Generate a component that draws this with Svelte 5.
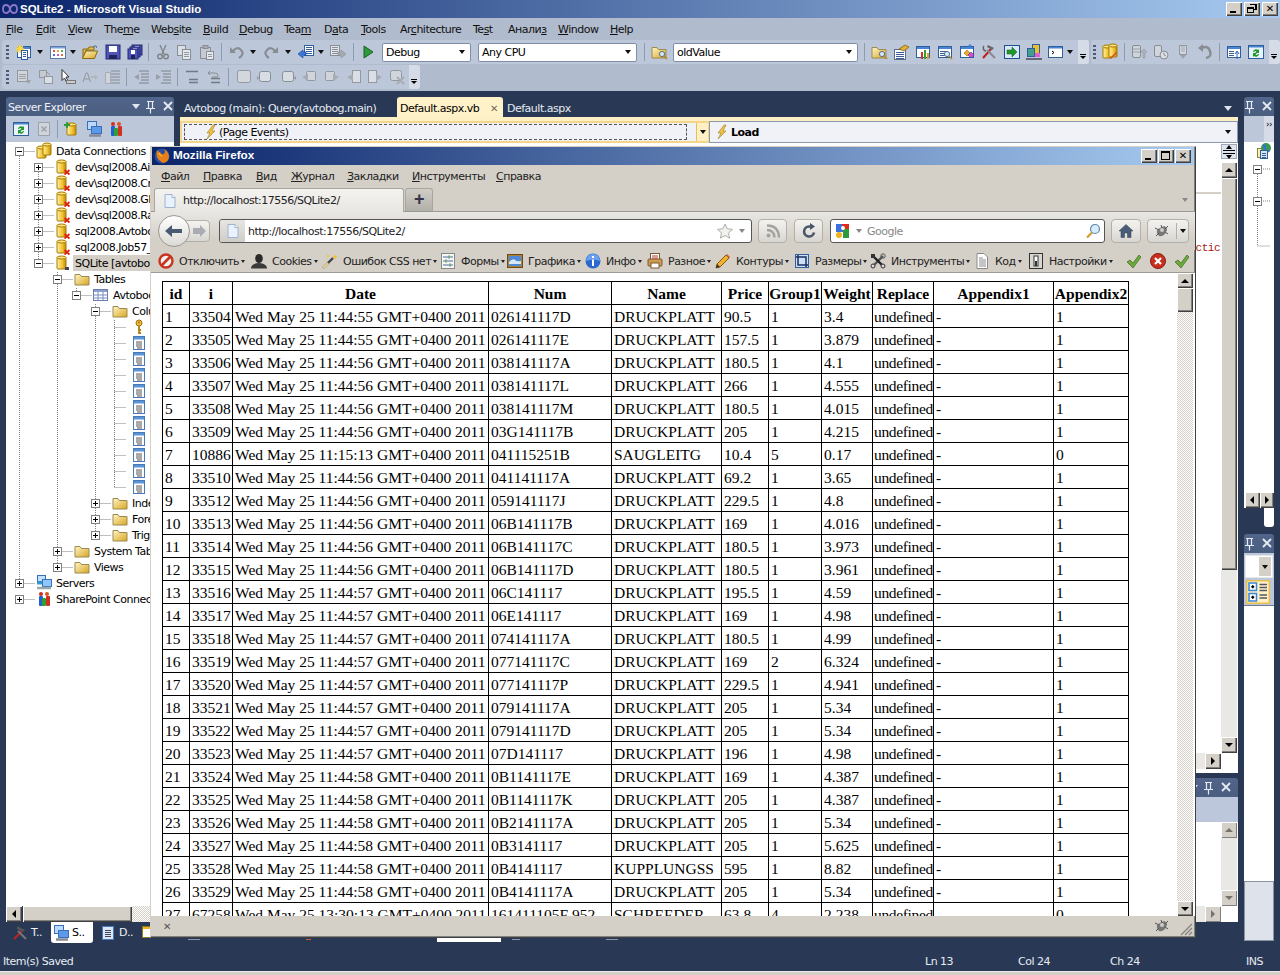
<script>
  const win = (c = '#4a86d0') => `<rect x="1.500" y="2.500" width="13" height="11" fill="#fff" stroke="#2d5f9e"/><rect x="2" y="3" width="12" height="2" fill="${c}"/>`;
  const lines = (x, y, n, w = 4, col = '#3a5f96') => Array.from({ length: n }, (_, i) => `<path d="M${x} ${y + i * 2 + .5}h${w}" stroke="${col}"/>`).join('');
  const cyl = (x, y, h, w = 8) => `<rect x="${x}" y="${y + 1}" width="${w}" height="${h}" rx="1" fill="url(#gy)" stroke="#a67a00"/><ellipse cx="${x + w / 2}" cy="${y + 1.5}" rx="${w / 2}" ry="1.500" fill="#ffe680" stroke="#a67a00"/>`;
  const gy = `<defs><linearGradient id="gy" x1="0" x2="1"><stop offset="0" stop-color="#fff2a8"/><stop offset=".6" stop-color="#f2c230"/><stop offset="1" stop-color="#b98a10"/></linearGradient><linearGradient id="gf" x1="0" x2="1" y1="0" y2="1"><stop offset="0" stop-color="#fff6c8"/><stop offset="1" stop-color="#d9a520"/></linearGradient></defs>`;
  const folder = `<path d="M1 3.500h5l1.500 2h7.500v8.500h-14z" fill="url(#gf)" stroke="#9a8a50"/>`;
  const mag = (x, y) => `<circle cx="${x}" cy="${y}" r="2.600" fill="#cfe6fb" stroke="#5a6f86"/><path d="M${x + 2} ${y + 2}l3 3" stroke="#b58a2a" stroke-width="1.600"/>`;
  const redx = `<path d="M9.500 11l5 4.500M14.500 11l-5 4.500" stroke="#e0200c" stroke-width="1.700"/>`;
  const floppy = (x, y, s) => `<rect x="${x}" y="${y}" width="${s}" height="${s}" fill="#4f55b8" stroke="#23286e"/><rect x="${x + 3}" y="${y + 1}" width="${s - 6}" height="${s / 2 - 1}" fill="#fff"/><rect x="${x + 3}" y="${y + s - 4}" width="${s - 6}" height="4" fill="#20245a"/>`;
  const bubble = (fill = '#e8eaee') => `<rect x="2.500" y="2.500" width="11" height="10" rx="2" fill="${fill}" stroke="#666"/>`;

  const I = {
    newproj: win() + `<path d="M4 0l1 2.500 2.500-1-1 2.500 2.500 1-2.500 1 1 2.500-2.500-1-1 2.500-1-2.500-2.500 1 1-2.500-2.500-1 2.500-1-1-2.500 2.500 1z" fill="#ffd84a"/><rect x="5.500" y="6.500" width="6" height="9" fill="#fff" stroke="#2d5f9e"/>` + lines(7, 8, 3, 3),
    grid: `<rect x=".5" y="2.500" width="15" height="12" fill="#fff" stroke="#5a7aa8"/><rect x="1" y="3" width="14" height="1.500" fill="#7aa2d8"/><g><rect x="3" y="6" width="2" height="2" fill="#e25050"/><rect x="7" y="6" width="2" height="2" fill="#e8b020"/><rect x="11" y="6" width="2" height="2" fill="#50b050"/><rect x="3" y="10" width="2" height="2" fill="#5070e0"/><rect x="7" y="10" width="2" height="2" fill="#d050c0"/><rect x="11" y="10" width="2" height="2" fill="#e07030"/></g>`,
    open: gy + `<path d="M1 5h5l1-2h5v3H4L1 14z" fill="#e8c050" stroke="#8a6a10"/><path d="M4 7h11.500l-3 7.500h-12z" fill="url(#gf)" stroke="#8a6a10"/><path d="M11 3q2-2.500 4 0l-1 .5" fill="none" stroke="#4a6aa0"/>`,
    save: floppy(1, 1, 14),
    saveall: floppy(5, 1, 10) + floppy(3, 3, 10) + floppy(1, 5, 10),
    cut: `<path d="M5 1l4 9M11 1l-4 9" stroke="#555" stroke-width="1.300"/><circle cx="5" cy="12.500" r="2.300" fill="none" stroke="#555" stroke-width="1.400"/><circle cx="11" cy="12.500" r="2.300" fill="none" stroke="#555" stroke-width="1.400"/>`,
    copy: `<rect x="1.500" y="1.500" width="8" height="10" fill="#eee" stroke="#666"/><rect x="6.500" y="5.500" width="8" height="10" fill="#fff" stroke="#666"/>` + lines(8, 8, 3, 5, '#777'),
    paste: `<rect x="1.500" y="3.500" width="10" height="11" fill="#ccc" stroke="#666"/><rect x="4" y="1.500" width="5" height="3" fill="#999" stroke="#666"/><rect x="7.500" y="7.500" width="7" height="8" fill="#fff" stroke="#666"/>` + lines(9, 10, 2, 4, '#777'),
    undo: `<path d="M4 7q4-5 8-1t-2 8" fill="none" stroke="#666" stroke-width="2.200"/><path d="M1 3v6h6z" fill="#666"/>`,
    redo: `<path d="M12 7q-4-5-8-1t2 8" fill="none" stroke="#666" stroke-width="2.200"/><path d="M15 3v6H9z" fill="#666"/>`,
    nav: `<rect x="6.500" y="1.500" width="9" height="10" fill="#fff" stroke="#2d5f9e"/>` + lines(8, 3, 4, 6) + `<path d="M8 9v3h-3v3L0 11l5-4v2z" transform="translate(0 -1)" fill="#3a7ae0" stroke="#1a3f90" stroke-width=".6"/>`,
    navf: `<rect x=".5" y="1.500" width="9" height="10" fill="#fff" stroke="#666"/>` + lines(2, 3, 4, 6, '#666') + `<path d="M8 8v3h3v3l5-4-5-4v2z" fill="#999" stroke="#666" stroke-width=".6"/>`,
    play: `<path d="M4 2l9 6-9 6z" fill="#2f9a3a" stroke="#1a5f22"/>`,
    findf: gy + folder + mag(11, 10),
    props: gy + `<rect x="1.500" y="5.500" width="11" height="10" fill="#fff" stroke="#5a6f86"/>` + lines(3, 8, 4, 8) + `<path d="M6 5l6-4 4 2-5 4z" fill="#e0b030" stroke="#7a5a10" stroke-width=".7"/>`,
    charts: win() + `<rect x="6" y="8" width="2" height="7" fill="#d03030"/><rect x="9" y="6" width="2" height="9" fill="#30a030"/><rect x="12" y="9" width="2" height="6" fill="#e0a020"/>`,
    findw: win() + lines(3, 7, 3, 6) + mag(10, 10),
    cls: win() + `<path d="M5 9l3-3 3 3-3 3z" fill="#e8b020" stroke="#8a6a10" stroke-width=".6"/><path d="M9 11l3-3 3 3-3 3z" fill="#d050d0" stroke="#702090" stroke-width=".6"/><path d="M11 0v4M9 2h4" stroke="#3a7ae0"/>`,
    tools: `<path d="M2 14L10 5" stroke="#c02020" stroke-width="2"/><path d="M7 1l6 3-2 2-5-3z" fill="#666"/><path d="M14 14L6 6" stroke="#888" stroke-width="2"/><path d="M3 2a3 3 0 0 0 2 5" fill="none" stroke="#666" stroke-width="1.500"/>`,
    go: `<rect x=".5" y="1.500" width="15" height="13" fill="#d8e8f8" stroke="#1f4f8e"/><path d="M3 6h5V3l5 5-5 5v-3H3z" fill="#1f9a2a" stroke="#0f5a18" stroke-width=".5"/>`,
    team: `<rect x="6.500" y=".5" width="7" height="9" fill="#e8c030" stroke="#2d5f9e"/><rect x="1.500" y="4.500" width="7" height="8" fill="#40a090" stroke="#2d5f9e"/><rect x="9" y="9" width="5" height="4" fill="#e060d0"/><path d="M0 15h16" stroke="#667" stroke-width="2"/>`,
    cmd: `<rect x=".5" y="2.500" width="14" height="11" fill="#fff" stroke="#2d5f9e"/><rect x="1" y="3" width="13" height="1.500" fill="#4a86d0"/><path d="M4 7l2 1.500L4 10" fill="none" stroke="#000"/>`,
    dbed: gy + cyl(1, 1, 12, 8) + cyl(7, 0, 12, 8) + `<path d="M8 14l6-6 1 1-6 6z" fill="#d05020"/>`,
    gdb: `<rect x="1.500" y="1.500" width="8" height="12" rx="1.500" fill="#ddd" stroke="#666"/><path d="M2 5h7M2 8h7" stroke="#888"/><path d="M10 8l3-3 3 3h-2v6h-2V8z" fill="#aaa" stroke="#666" stroke-width=".5"/>`,
    gclk: `<rect x="1.500" y="1.500" width="7" height="11" rx="1.500" fill="#ddd" stroke="#666"/><circle cx="11" cy="11" r="4" fill="#eee" stroke="#666"/><path d="M11 8.500V11l2 1" fill="none" stroke="#666"/>`,
    gpin: `<rect x="5.500" y="1.500" width="7" height="9" fill="#ddd" stroke="#777"/><path d="M7 3h4M7 5h4M7 7h4" stroke="#999"/><path d="M6 11h6l-3 4z" fill="#888"/>`,
    gback: `<path d="M10 14q6-1 4-7T6 4" fill="none" stroke="#666" stroke-width="2.500"/><path d="M7 0L2 4l5 4z" fill="#666"/>`,
    docup: win() + lines(3, 7, 4, 5) + `<path d="M11 15V8M9 10l2-3 2 3" fill="none" stroke="#2a60d0"/>`,
    refresh: `<rect x=".5" y="1.500" width="15" height="13" fill="#eaf2fb" stroke="#2d5f9e"/><rect x="1" y="2" width="14" height="1.500" fill="#4a86d0"/><path d="M5 8a3 3 0 0 1 5-2l1-1v4H7l1.500-1.500A1.600 1.600 0 0 0 6 8zM11 10a3 3 0 0 1-5 2l-1 1V9h4l-1.500 1.500A1.600 1.600 0 0 0 10 10z" fill="#1f9a2a"/>`,
    stop: `<rect x="2.500" y="1.500" width="11" height="13" fill="#ddd" stroke="#888"/><path d="M5.500 5.500l5 5M10.500 5.500l-5 5" stroke="#888" stroke-width="1.500"/>`,
    gr1: `<rect x="1.500" y="1.500" width="10" height="11" fill="#ddd" stroke="#777"/>` + lines(3, 5, 3, 7, '#888') + `<path d="M10 11h5l-2.500 4z" fill="#888"/>`,
    gr2: `<rect x="1.500" y="1.500" width="7" height="7" fill="#ccc" stroke="#777"/><rect x="6.500" y="7.500" width="8" height="7" fill="#eee" stroke="#777"/><path d="M9 3l3 3" stroke="#777"/>`,
    gr3: `<path d="M2 .5v11l2.500-2.500 2 4 1.500-1-2-4H9z" fill="#fff" stroke="#333"/><rect x="6.500" y="11.500" width="9" height="3" fill="#ccc" stroke="#777"/>`,
    gr4: `<path d="M1 13L4 4h1.500l3 9M2.500 10h5" fill="none" stroke="#777"/><path d="M9 7h4V5l3 3-3 3V9H9z" fill="#aaa"/>`,
    gr5: `<path d="M1.500 3.500h5v11h-5z" fill="#ddd" stroke="#999"/><path d="M7 2h9M7 5h9M7 8h9M7 11h9M7 14h9" stroke="#666"/>`,
    outd: `<path d="M6 2h10M8 5h8M8 8h8M8 11h8M6 14h10" stroke="#555"/><path d="M6 5L1 8l5 3z" fill="#6a86b8"/>`,
    ind: `<path d="M6 2h10M8 5h8M8 8h8M8 11h8M6 14h10" stroke="#555"/><path d="M1 5l5 3-5 3z" fill="#6a86b8"/>`,
    comm: `<path d="M2 2.500h12M5 13.500h9M5 10.500h9" stroke="#444" stroke-width="1.400"/>`,
    uncomm: `<path d="M5 9.500h9M5 13.500h9" stroke="#444" stroke-width="1.400"/><path d="M4 2l-2 2 2 2M3 4h6q3 0 3 2.500T9 8H6" fill="none" stroke="#666"/>`,
    b1: `<rect x="1.500" y="1.500" width="13" height="12" rx="2" fill="#e0e3e8" stroke="#777"/>`,
    b2: bubble() + `<path d="M2 9L0 7v4z" fill="#777"/>`,
    b3: bubble() + `<path d="M14 9l2-2v4z" fill="#777"/>`,
    b4: `<rect x="5.500" y="2.500" width="9" height="9" rx="1" fill="#ddd" stroke="#777"/><path d="M7 5L1 8l6 4z" fill="#999"/>`,
    b5: `<rect x="1.500" y="2.500" width="9" height="9" rx="1" fill="#ddd" stroke="#777"/><path d="M9 5l6 3-6 4z" fill="#999"/>`,
    b6: `<rect x="6.500" y="1.500" width="8" height="12" fill="#eee" stroke="#777"/><path d="M7 5L1 8l6 4z" fill="#999"/>`,
    b7: `<rect x="1.500" y="1.500" width="8" height="12" fill="#eee" stroke="#777"/><path d="M9 5l6 3-6 4z" fill="#999"/>`,
    b8: `<rect x="1.500" y="1.500" width="11" height="10" rx="2" fill="#ddd" stroke="#777"/><path d="M8 8l7 7M15 8l-7 7" stroke="#999" stroke-width="1.800"/>`,
    lightning: `<path d="M10 1L4 9h3l-3 6 8-8H9l3-6z" fill="#f0c040" stroke="#a08030" stroke-width=".6"/>`,
    db: gy + cyl(1, 3, 11, 9) + cyl(7, 0, 11, 8),
    dbx: gy + cyl(2, 1, 12, 9) + redx,
    dbp: gy + cyl(2, 1, 12, 9) + `<path d="M10 12h4v3h-4z" fill="#445"/>`,
    folder: gy + folder,
    table: `<rect x=".5" y="2.500" width="14" height="11" fill="#fff" stroke="#6a7fb0"/><rect x="1" y="3" width="13" height="2" fill="#8aa0d0"/><path d="M5 5v8M10 5v8M1 8h13M1 11h13" stroke="#7a8fc0"/>`,
    key: `<circle cx="8" cy="4" r="3" fill="#f0c040" stroke="#a07010"/><circle cx="8" cy="3.500" r="1" fill="#a07010"/><path d="M8 7v8M8 11h2M8 14h2" stroke="#b08010" stroke-width="1.800"/>`,
    col: `<rect x="2.500" y="1.500" width="11" height="13" fill="#fff" stroke="#4a78b8"/><rect x="3" y="2" width="10" height="2.500" fill="#5a94d8"/><path d="M5 7h6M5 9h6M5 11h6M6 13h5" stroke="#555"/>`,
    servers: `<rect x="1.500" y=".5" width="8" height="6" fill="#bfe0ff" stroke="#3a70b8"/><rect x="6.500" y="4.500" width="9" height="7" fill="#8fc8ff" stroke="#3a70b8"/><path d="M1 13h14" stroke="#9aa" stroke-width="2.500"/><path d="M1 8h5" stroke="#39c" stroke-width="3"/>`,
    share: `<circle cx="5" cy="3" r="2" fill="#d03020"/><circle cx="11" cy="3" r="2" fill="#e05020"/><rect x="3" y="5" width="4" height="10" rx="1" fill="#2060d0"/><rect x="6" y="7" width="4" height="8" rx="1" fill="#30a030"/><rect x="10" y="5" width="4" height="10" rx="1" fill="#d03020"/>`,
    wrench: `<path d="M2 14L10 6" stroke="#c02020" stroke-width="2"/><path d="M5 1l8 4-2 2-6-3z" fill="#555"/><path d="M14 14L6 6" stroke="#777" stroke-width="2"/>`,
    srv: `<rect x="1.500" y=".5" width="9" height="8" fill="#bcd8ff" stroke="#3a70b8"/><rect x="5.500" y="5.500" width="10" height="7" fill="#5a9ae8" stroke="#3a70b8"/><path d="M3 14.500h12" stroke="#889" stroke-width="2.500"/>`,
    docl: `<rect x="2.500" y="1.500" width="11" height="13" fill="#dbe6f5" stroke="#4a78b8"/>` + lines(5, 5, 4, 6, '#445'),
    cls2: `<rect x=".5" y="1.500" width="12" height="11" fill="#fff" stroke="#8a8020"/><rect x="1" y="2" width="11" height="2" fill="#f0b020"/><path d="M9 9l3-3 3 3-3 3z" fill="#d050d0"/>`,
    expd: `<rect x=".5" y=".5" width="15" height="15" fill="#fff2c8" stroke="#e8c050"/><rect x="2" y="2" width="5" height="5" fill="#fff" stroke="#3a86d8"/><rect x="2" y="9" width="5" height="5" fill="#fff" stroke="#3a86d8"/><path d="M3.500 4.500h2M4.500 3.500v2M3.500 11.500h2M4.500 10.500v2" stroke="#000"/><path d="M9 3h5M9 5h5M9 7h5M9 10h5M9 12h5" stroke="#556"/>`,
    globe: `<rect x="1.500" y="5.500" width="8" height="9" fill="#fff0b0" stroke="#8a8050"/><circle cx="10" cy="5" r="5" fill="#3a9a50"/><path d="M7 2q3 1 2 4t4 2" fill="none" stroke="#3a70d8" stroke-width="2"/><rect x="4.500" y="7.500" width="7" height="8" fill="#d8e6f8" stroke="#2d5f9e"/>` + lines(6, 10, 3, 4),
    ff: `<circle cx="8" cy="8" r="7.500" fill="#2a4fa0"/><path d="M3 2q-1 4 0 7t6 6q6-1 6-7-1-5-5-7 2 3 0 5-3 1-3-1-2-1-4-3z" fill="#e8801a"/><path d="M5 5q1 3 3 3" stroke="#ffd030" fill="none"/>`,
    page: `<path d="M3 1.500h7l3 3v10H3z" fill="#e9f2fc" stroke="#9fb4cc"/><path d="M10 1.500v3h3" fill="#fff" stroke="#9fb4cc"/>`,
    star: `<path d="M8 1l2.200 4.800 5.300.6-4 3.500 1.100 5.200L8 12.500l-4.600 2.600 1.100-5.200-4-3.500 5.300-.6z" fill="#f2f1ee" stroke="#b0aeaa"/>`,
    rss: `<circle cx="3.500" cy="12.500" r="2" fill="#a5a39e"/><path d="M2 7q7 0 7.500 7.500M2 2.500q11.500 0 12 12" fill="none" stroke="#a5a39e" stroke-width="2.400"/>`,
    reload: `<path d="M13 9.500A5 5 0 1 1 8 3.500h3" fill="none" stroke="#4a5668" stroke-width="2.600"/><path d="M9 0l5 3.500L9 7z" fill="#4a5668"/>`,
    google: `<rect x="1" y="1" width="7" height="8" fill="#3a70e0"/><rect x="7" y="1" width="7" height="5" fill="#e02a1c"/><rect x="8" y="6" width="6" height="9" fill="#2f9a3a"/><circle cx="4" cy="12" r="3" fill="#f0b020"/><circle cx="8" cy="5" r="2" fill="#fff"/>`,
    searchmag: `<circle cx="10" cy="6" r="4.500" fill="#d8ecfc" stroke="#5c86a8" stroke-width="1.200"/><path d="M7 9.500l-5 5" stroke="#d09a30" stroke-width="2.200"/>`,
    home: `<path d="M8 1.500L1 8h2v6.500h3.500V10h3v4.500H13V8h2z" fill="#4a5d78" stroke="#333f52" stroke-width=".5"/>`,
    bug: `<path d="M3 10q-1-3 3-5l4-2q3 1 3 4l-2 4q-3 3-6 2z" fill="#777"/><path d="M1 5l4 2M2 13l3-3M7 2l1 3M14 3l-3 3M14 11l-3-2" stroke="#555"/><circle cx="8" cy="7" r="2" fill="#ccc"/>`,
    no: `<circle cx="8" cy="8" r="6.500" fill="#f2f2f2" stroke="#c8341e" stroke-width="2.400"/><path d="M3.500 12.500l9-9" stroke="#c8341e" stroke-width="2.600"/>`,
    person: `<ellipse cx="8" cy="5.500" rx="3.800" ry="4.500" fill="#2a2a2a"/><path d="M0 15.500q0-5 8-5.500 8 .5 8 5.500z" fill="#3a3a3a"/>`,
    wand: `<path d="M1 15L11 5" stroke="#444" stroke-width="2.400"/><path d="M1 15L6 10" stroke="#e8d090" stroke-width="2.400"/><path d="M13 1l.7 2 2 .7-2 .7-.7 2-.7-2-2-.7 2-.7zM6 1l.5 1.500L8 3l-1.500.5L6 5l-.5-1.500L4 3l1.500-.5z" fill="#f2c020"/>`,
    form: `<rect x="1.500" y=".5" width="13" height="15" fill="#f8f8f2" stroke="#888"/><path d="M3 4h10M3 8h10M3 12h10" stroke="#4a6aa8"/><rect x="8" y="2.500" width="2" height="3" fill="#7a8"/><rect x="5" y="6.500" width="2" height="3" fill="#7a8"/><rect x="9" y="10.500" width="2" height="3" fill="#7a8"/>`,
    pic: `<rect x=".5" y="1.500" width="15" height="13" fill="#b08030" stroke="#6a4a18"/><rect x="2" y="3" width="12" height="10" fill="#4f8ad8"/><path d="M2 9q4-4 6-2t6 1v3H2z" fill="#d8e8f8"/>`,
    info: `<circle cx="8" cy="8" r="7.500" fill="#2a68d0"/><path d="M1 8a7 7 0 0 1 14 0q-7-3-14 0" fill="#6aa0ee"/><rect x="7" y="6.500" width="2" height="6.500" fill="#fff"/><rect x="7" y="3" width="2" height="2" fill="#fff"/>`,
    misc: `<rect x="3.500" y=".5" width="9" height="7" fill="#fff" stroke="#7a5a30"/><rect x="1" y="6" width="14" height="7" rx="1" fill="#d09a50" stroke="#7a5a30"/><rect x="4" y="10" width="8" height="5" fill="#fff" stroke="#7a5a30"/><path d="M5 3h6M5 5h6" stroke="#b04030"/>`,
    pencil: `<path d="M1 15l1-4 9-9 3 3-9 9z" fill="#f0b030" stroke="#8a5a10"/><path d="M1 15l1-4 3 3z" fill="#333"/><path d="M11 2l3 3 1-1-3-3z" fill="#d06040"/>`,
    crop: `<rect x="1.500" y="1.500" width="13" height="13" fill="#cfe0f6" stroke="#2d5f9e"/><path d="M4 2v10h10M2 4h10v10" fill="none" stroke="#1a2f60" stroke-width="1.500"/>`,
    cross: `<path d="M2 14L13 3" stroke="#555" stroke-width="2.400"/><path d="M14 14L3 3" stroke="#222" stroke-width="2.400"/><circle cx="13" cy="3" r="2.200" fill="none" stroke="#555"/><circle cx="3" cy="13" r="2" fill="#ddd" stroke="#333"/><circle cx="13" cy="13" r="2" fill="#ddd" stroke="#333"/><rect x="1" y="1" width="4" height="4" fill="#333"/>`,
    code: `<path d="M3 .5h7l3.500 3.500v11.500H3z" fill="#fff" stroke="#8a8a8a"/><path d="M5 5h4M5 7h7M5 9h7M5 11h7M5 13h7" stroke="#8a8a8a"/>`,
    opts: `<rect x="1.500" y=".5" width="13" height="15" fill="#d8d6d0" stroke="#333"/><rect x="6" y="3" width="4" height="10" fill="#fff" stroke="#333"/><rect x="7" y="8" width="2" height="5" fill="#333"/>`,
    check: `<path d="M1 9l3-2 3 3 6-8 2 2-8 11z" fill="#6aa93c" stroke="#3f6f1e" stroke-width=".7"/>`,
    xred: `<circle cx="8" cy="8" r="7.500" fill="#c8301e" stroke="#8a1a10"/><path d="M5 5l6 6M11 5l-6 6" stroke="#fff" stroke-width="2.200"/>`,
    vslogo: `<path d="M1 8q0-4 3-4t4 4 4 4 3-4-3-4-4 4-4 4-3-4z" fill="none" stroke="#8a78c8" stroke-width="1.800"/>`
  };
  I.dbx0 = gy + cyl(3, 2, 11, 9) + `<path d="M0 4h6M3 1v6" stroke="#2f9a3a" stroke-width="1.800"/>`;

  const ul = (s) => { const i = s.indexOf('&'); return i < 0 ? [s, '', ''] : [s.slice(0, i), s[i + 1], s.slice(i + 2)]; };
  const lay = (items, start) => { let e = start; return items.map((it) => { const w = it.w ?? 16; const r = { ...it, w, ml: it.x - e }; e = it.x + w; return r; }); };
  const ic = (n, x, off = false, w = 16) => ({ k: 'ic', n, x, off, w });
  const sep = (x) => ({ k: 'sep', x, w: 1 });
  const ar = (x) => ({ k: 'ar', x, w: 6 });
  const cb = (t, x, w) => ({ k: 'cb', t, x, w });
  const grip = (x) => ({ k: 'grip', x, w: 3 });

  const vsMenu = [['&File', 30], ['&Edit', 32], ['&View', 36], ['The&me', 47], ['Web&site', 52], ['&Build', 36], ['&Debug', 45], ['Tea&m', 40], ['D&ata', 37], ['&Tools', 39], ['Ar&chitecture', 73], ['Te&st', 35], ['Анали&з', 50], ['&Window', 52], ['&Help', 32]];
  const row1 = lay([grip(6), ic('newproj', 16), ar(37), ic('grid', 50), ar(70), ic('open', 82), ic('save', 105), ic('saveall', 127), sep(148), ic('cut', 155, true), ic('copy', 176, true), ic('paste', 199, true), sep(221), ic('undo', 229, true), ar(250), ic('redo', 263, true), ar(285), ic('nav', 298, false, 18), ar(318), ic('navf', 330, true), sep(353), ic('play', 360), cb('Debug', 382, 89), cb('Any CPU', 478, 159), sep(644), ic('findf', 651), cb('oldValue', 673, 185), sep(864), ic('findf', 871), ic('props', 893), ic('charts', 915), ic('findw', 937), ic('cls', 959), ic('tools', 981), ic('go', 1004), ic('team', 1026), ic('cmd', 1048), ar(1067)], 2);
  const row1b = lay([grip(1093), ic('dbed', 1102), sep(1124), ic('gdb', 1131, true), ic('gclk', 1153, true), ic('gpin', 1174, true), ic('gback', 1196, true), sep(1219), ic('docup', 1226), ic('refresh', 1248)], 1091);
  const row2 = lay([grip(6), ic('gr1', 16, true), ic('gr2', 38, true), ic('gr3', 60), ic('gr4', 82, true), ic('gr5', 104, true), sep(126), ic('outd', 133, true), ic('ind', 155, true), sep(177), ic('comm', 184, true), ic('uncomm', 206, true), sep(228), ic('b1', 236, true), ic('b2', 257, true), ic('b3', 280, true), ic('b4', 301, true), ic('b5', 324, true), ic('b6', 346, true), ic('b7', 367, true), ic('b8', 389, true)], 2);
  const seTools = lay([ic('refresh', 13), ic('stop', 36, true), sep(57), ic('dbx0', 64), ic('srv', 86), ic('share', 108)], 6);

  const T = (lvl, ico, text, exp, sel) => ({ lvl, ico, text, exp, sel });
  const tree = [
    T(0, 'db', 'Data Connections', '-'),
    T(1, 'dbx', 'dev\\sql2008.Air', '+'), T(1, 'dbx', 'dev\\sql2008.Cr', '+'), T(1, 'dbx', 'dev\\sql2008.GI', '+'), T(1, 'dbx', 'dev\\sql2008.Ra', '+'),
    T(1, 'dbx', 'sql2008.Avtobc', '+'), T(1, 'dbx', 'sql2008.Job57_', '+'),
    T(1, 'dbp', 'SQLite [avtobog', '-', true),
    T(2, 'folder', 'Tables', '-'), T(3, 'table', 'Avtoboc', '-'), T(4, 'folder', 'Colu', '-'),
    T(5, 'key', ''),
    ...Array.from({ length: 10 }, () => T(5, 'col', '')),
    T(4, 'folder', 'Inde', '+'), T(4, 'folder', 'Fore', '+'), T(4, 'folder', 'Trig', '+'),
    T(2, 'folder', 'System Tab', '+'), T(2, 'folder', 'Views', '+'),
    T(0, 'servers', 'Servers', '+'), T(0, 'share', 'SharePoint Connect', '+')
  ];
  const rowY = (i) => 9 + i * 16;
  const guides = [[13.5, 9, 441], [32.5, 25, 121], [51.5, 121, 425], [70.5, 137, 153], [89.5, 153, 393], [108.5, 169, 345]];
  const gx = (l) => 13.5 + 19 * l;

  const ffMenu = [['&Файл', 42], ['&Правка', 53], ['&Вид', 35], ['&Журнал', 56], ['&Закладки', 65], ['&Инструменты', 84], ['&Справка', 70]];
  const wd = [
    ['no', 'Отключить', 93], ['person', 'Cookies', 71], ['wand', 'Ошибок CSS нет', 118], ['form', 'Формы', 67], ['pic', 'Графика', 78], ['info', 'Инфо', 62],
    ['misc', 'Разное', 68], ['pencil', 'Контуры', 79], ['crop', 'Размеры', 76], ['cross', 'Инструменты', 104], ['code', 'Код', 54], ['opts', 'Настройки', 96]
  ];
  const cols = ['id', 'i', 'Date', 'Num', 'Name', 'Price', 'Group1', 'Weight', 'Replace', 'Appendix1', 'Appendix2'];
  const D = 'DRUCKPLATT';
  const d = (h) => `Wed May 25 ${h} GMT+0400 2011`;
  const rows = [
    [1, 33504, d('11:44:55'), '026141117D', D, '90.5', 1, '3.4', 1],
    [2, 33505, d('11:44:55'), '026141117E', D, '157.5', 1, '3.879', 1],
    [3, 33506, d('11:44:56'), '038141117A', D, '180.5', 1, '4.1', 1],
    [4, 33507, d('11:44:56'), '038141117L', D, '266', 1, '4.555', 1],
    [5, 33508, d('11:44:56'), '038141117M', D, '180.5', 1, '4.015', 1],
    [6, 33509, d('11:44:56'), '03G141117B', D, '205', 1, '4.215', 1],
    [7, 10886, d('11:15:13'), '041115251B', 'SAUGLEITG', '10.4', 5, '0.17', 0],
    [8, 33510, d('11:44:56'), '041141117A', D, '69.2', 1, '3.65', 1],
    [9, 33512, d('11:44:56'), '059141117J', D, '229.5', 1, '4.8', 1],
    [10, 33513, d('11:44:56'), '06B141117B', D, '169', 1, '4.016', 1],
    [11, 33514, d('11:44:56'), '06B141117C', D, '180.5', 1, '3.973', 1],
    [12, 33515, d('11:44:56'), '06B141117D', D, '180.5', 1, '3.961', 1],
    [13, 33516, d('11:44:57'), '06C141117', D, '195.5', 1, '4.59', 1],
    [14, 33517, d('11:44:57'), '06E141117', D, '169', 1, '4.98', 1],
    [15, 33518, d('11:44:57'), '074141117A', D, '180.5', 1, '4.99', 1],
    [16, 33519, d('11:44:57'), '077141117C', D, '169', 2, '6.324', 1],
    [17, 33520, d('11:44:57'), '077141117P', D, '229.5', 1, '4.941', 1],
    [18, 33521, d('11:44:57'), '079141117A', D, '205', 1, '5.34', 1],
    [19, 33522, d('11:44:57'), '079141117D', D, '205', 1, '5.34', 1],
    [20, 33523, d('11:44:57'), '07D141117', D, '196', 1, '4.98', 1],
    [21, 33524, d('11:44:58'), '0B1141117E', D, '169', 1, '4.387', 1],
    [22, 33525, d('11:44:58'), '0B1141117K', D, '205', 1, '4.387', 1],
    [23, 33526, d('11:44:58'), '0B2141117A', D, '205', 1, '5.34', 1],
    [24, 33527, d('11:44:58'), '0B3141117', D, '205', 1, '5.625', 1],
    [25, 33528, d('11:44:58'), '0B4141117', 'KUPPLUNGSS', '595', 1, '8.82', 1],
    [26, 33529, d('11:44:58'), '0B4141117A', D, '205', 1, '5.34', 1],
    [27, 67258, d('13:30:13'), '161411105F 952', 'SCHREEDER', '63.8', 4, '2.238', 0]
  ];
  const colW = [27, 43, 256, 123, 110, 47, 53, 51, 61, 120, 75];
</script>

{#snippet icon(n, off = false, w = 16)}
  <svg class="ic" class:off width={w} height="16" viewBox="0 0 {w} 16">{@html I[n]}</svg>
{/snippet}

{#snippet menuLabel(s)}
  {@const p = ul(s)}{p[0]}<u>{p[1]}</u>{p[2]}
{/snippet}

{#snippet tbar(items)}
  {#each items as it}
    {#if it.k === 'ic'}
      <span class="slot" style:margin-left="{it.ml}px">{@render icon(it.n, it.off, it.w)}</span>
    {:else if it.k === 'sep'}
      <span class="tsep" style:margin-left="{it.ml}px"></span>
    {:else if it.k === 'ar'}
      <span class="tarr" style:margin-left="{it.ml}px"></span>
    {:else if it.k === 'grip'}
      <span class="grip" style:margin-left="{it.ml}px"></span>
    {:else}
      <span class="combo" style:margin-left="{it.ml}px" style:width="{it.w}px"><span class="ctext">{it.t}</span><span class="tarr"></span></span>
    {/if}
  {/each}
{/snippet}

{#snippet close()}
  <svg class="pinx" width="33" height="14" viewBox="0 0 33 14">
    <path d="M2 1.500h7M3.500 1.500v6.500M7.500 1.500v6.500M1 8.500h9M5.500 8.500v5" fill="none" stroke="#e6ebf3" stroke-width="1.200"/>
    <path d="M19 2l8 8M27 2l-8 8" stroke="#e6ebf3" stroke-width="1.800"/>
  </svg>
{/snippet}

<div class="vs">
  <header class="vtitle">
    {@render icon('vslogo')}
    <span class="ttext">SQLite2 - Microsoft Visual Studio</span>
    <div class="wbtns">
      <button class="wbtn" aria-label="min"><i class="gmin"></i></button>
      <button class="wbtn" aria-label="restore"><i class="grest"></i></button>
      <button class="wbtn" aria-label="close"><i class="gx">✕</i></button>
    </div>
  </header>

  <div class="chrome">
    <nav class="vmenu">
      {#each vsMenu as m}<span class="mi" style:width="{m[1]}px">{@render menuLabel(m[0])}</span>{/each}
    </nav>
    <div class="trow r1">
      <div class="tb t1">{@render tbar(row1)}<span class="ovf o1"></span></div>
      <div class="tb t2">{@render tbar(row1b)}<span class="ovf o2"></span></div>
    </div>
    <div class="trow r2">
      <div class="tb t3">{@render tbar(row2)}<span class="ovf o3"></span></div>
    </div>
  </div>

  <main class="dock">
    <section class="left">
      <div class="phead"><span class="ptitle">Server Explorer</span><span class="dn"></span>{@render close()}</div>
      <div class="ptool">{@render tbar(seTools)}</div>
      <div class="tree">
        <svg class="guides" width="168" height="764">
          {#each guides as g}<path d="M{g[0]} {g[1]}V{g[2]}" stroke="#808080" stroke-dasharray="1 1" fill="none"/>{/each}
          {#each tree as r, i}<path d="M{gx(r.lvl)} {rowY(i) - 0.5}h{r.exp ? 15 : 12}" stroke="#808080" stroke-dasharray="1 1" fill="none"/>{/each}
        </svg>
        {#each tree as r}
          <div class="trow-i" style:padding-left="{9 + 19 * r.lvl}px">
            <span class="exp">{#if r.exp}<b class="box" class:plus={r.exp === '+'}></b>{/if}</span>
            <span class="tic">{@render icon(r.ico)}</span>
            <span class="lbl" class:sel={r.sel}>{r.text}</span>
          </div>
        {/each}
      </div>
      <div class="hsb">
        <span class="sbtn"><i class="tri l"></i></span><span class="thumb h"></span><span class="chk"></span>
      </div>
      <div class="btabs">
        <span class="btab">{@render icon('wrench')}T..</span>
        <span class="btab on">{@render icon('srv')}S..</span>
        <span class="btab">{@render icon('docl')}D..</span>
        <span class="btab">{@render icon('cls2')}</span>
      </div>
    </section>

    <section class="center">
      <div class="etabs">
        <span class="etab t-a">Avtobog (main): Query(avtobog.main)</span>
        <span class="etab on">Default.aspx.vb<span class="ex">✕</span></span>
        <span class="etab t-c">Default.aspx</span>
        <span class="dn edn"></span>
      </div>
      <div class="doc">
        <div class="drops">
          <div class="dleft"><div class="focus">{@render icon('lightning')}<span>(Page Events)</span></div><span class="dbtn"><span class="tarr"></span></span></div>
          <div class="dright">{@render icon('lightning')}<b>Load</b><span class="tarr"></span></div>
        </div>
        <div class="ebody">
          <div class="code">
            <div class="cline"></div>
            <div class="ctic">ctic</div>
          </div>
          <div class="evs">
            <span class="split"><svg width="14" height="14" viewBox="0 0 14 14"><path d="M1 5.500h12M1 8.500h12" stroke="#000"/><path d="M7 0l3 4H4zM7 14l3-4H4z" fill="#000"/></svg></span>
            <span class="sbtn"><i class="tri u"></i></span>
            <span class="thumb v1"></span>
            <span class="lt"></span>
            <span class="sbtn"><i class="tri d"></i></span>
          </div>
        </div>
        <div class="ehs"><span class="lt"></span><span class="sbtn"><i class="tri r"></i></span><span class="corner"></span></div>
      </div>
      <div class="lower">
        <div class="phead"><span class="sp"></span><span class="dn"></span>{@render close()}</div>
        <div class="band"></div>
        <div class="lbody">
          <div class="lwhite"></div>
          <div class="lvs"><span class="sbtn dis"><i class="tri u g"></i></span><span class="lt"></span><span class="sbtn dis"><i class="tri d g"></i></span></div>
        </div>
        <div class="lhs"><span class="lt"></span><span class="sbtn dis"><i class="tri r g"></i></span><span class="corner"></span></div>
      </div>
      <div class="docktabs"><i class="m1"></i><i class="m2"></i><i class="m3"></i><i class="m4"></i><i class="m5"></i></div>
    </section>

    <section class="right">
      <div class="rp a">
        <div class="phead"><span class="sp"></span>{@render close()}</div>
        <div class="band rb"><span class="rbg"></span><span class="rchev">››</span></div>
        <div class="rwhite">
          <div class="rglobe">{@render icon('globe')}</div>
          <svg class="rg" width="30" height="100" viewBox="0 0 30 100">
            <path d="M13.500 14V88H26M17 11h9M17 43h9" fill="none" stroke="#808080" stroke-dasharray="1 1"/>
            <rect x="9.500" y="7.500" width="8" height="8" fill="#fff" stroke="#808080"/><path d="M11 11.500h5" stroke="#000"/>
            <rect x="9.500" y="39.500" width="8" height="8" fill="#fff" stroke="#808080"/><path d="M11 43.500h5" stroke="#000"/>
          </svg>
          <div class="rbtns"><span class="sbtn"><i class="tri l"></i></span><span class="sbtn"><i class="tri r"></i></span></div>
        </div>
        <div class="rtail"></div>
      </div>
      <div class="rp b">
        <div class="phead"><span class="sp"></span>{@render close()}</div>
        <div class="rcombo"><span class="rcb"><span></span><em><i class="tarr"></i></em></span></div>
        <div class="rexp">{@render icon('expd')}</div>
        <div class="rw2"></div>
        <div class="rw3"></div>
      </div>
    </section>
  </main>

  <footer class="status">
    <span class="s0">Item(s) Saved</span><span class="s1">Ln 13</span><span class="s2">Col 24</span><span class="s3">Ch 24</span><span class="s4">INS</span>
  </footer>
  <div class="bottom"></div>

  <div class="ffwin">
    <div class="ftitle">
      {@render icon('ff')}
      <span class="ftext">Mozilla Firefox</span>
      <div class="wbtns f">
        <button class="wbtn" aria-label="min"><i class="gmin"></i></button>
        <button class="wbtn" aria-label="max"><i class="gmax"></i></button>
        <button class="wbtn" aria-label="close"><i class="gx">✕</i></button>
      </div>
    </div>
    <nav class="fmenu">
      {#each ffMenu as m}<span class="mi" style:width="{m[1]}px">{@render menuLabel(m[0])}</span>{/each}
    </nav>
    <div class="ftabs">
      <div class="ftab">{@render icon('page')}<span>http://localhost:17556/SQLite2/</span></div>
      <div class="fnew">+</div>
      <span class="fdn"></span>
    </div>
    <div class="fnav">
      <div class="bf">
        <span class="back"><svg width="20" height="16" viewBox="0 0 20 16"><path d="M1 8l7-6v4h10v4H8v4z" fill="#4a5a70"/></svg></span>
        <span class="fwd"><svg width="14" height="12" viewBox="0 0 14 12"><path d="M13 6L7 0v3H0v6h7v3z" fill="#a9adb3"/></svg></span>
      </div>
      <div class="urlbar">
        <span class="site">{@render icon('page')}</span>
        <span class="url">http://localhost:17556/SQLite2/</span>
        <span class="ustar">{@render icon('star')}</span>
        <span class="tarr g"></span>
      </div>
      <span class="nbtn n1">{@render icon('rss')}</span>
      <span class="nbtn n2">{@render icon('reload')}</span>
      <div class="search">
        {@render icon('google')}<span class="tarr g"></span>
        <span class="gtext">Google</span>
        <span class="smag">{@render icon('searchmag')}</span>
      </div>
      <span class="nbtn n3">{@render icon('home')}</span>
      <span class="nbtn n4"><span class="bugc">{@render icon('bug')}</span><span class="bugd"><i class="tarr"></i></span></span>
    </div>
    <div class="wdbar">
      {#each wd as w}
        <span class="wd" style:width="{w[2]}px">{@render icon(w[0])}<span class="wdt">{w[1]}</span><i class="wda"></i></span>
      {/each}
      <span class="wend">{@render icon('check')}{@render icon('xred')}{@render icon('check')}</span>
    </div>
    <div class="content">
      <div class="page">
        <table>
          <colgroup>{#each colW as w}<col style:width="{w}px" />{/each}</colgroup>
          <thead><tr>{#each cols as c}<th>{c}</th>{/each}</tr></thead>
          <tbody>
            {#each rows as r}
              <tr>
                <td>{r[0]}</td><td>{r[1]}</td><td>{r[2]}</td><td>{r[3]}</td><td>{r[4]}</td><td>{r[5]}</td><td>{r[6]}</td><td>{r[7]}</td><td class="undef">undefined</td><td>-</td><td>{r[8]}</td>
              </tr>
            {/each}
          </tbody>
        </table>
      </div>
      <div class="fvs">
        <span class="sbtn"><i class="tri u"></i></span><span class="thumb v2"></span><span class="chk"></span><span class="sbtn"><i class="tri d"></i></span>
      </div>
    </div>
    <div class="fstatus">
      <span class="fx">✕</span><span class="sp"></span>
      <span class="sbug">{@render icon('bug')}</span>
      <svg class="resz" width="13" height="13" viewBox="0 0 13 13"><path d="M12 1L1 12M12 5l-7 7M12 9l-3 3" stroke="#808080" stroke-width="1.200"/></svg>
    </div>
  </div>
</div>

<style>
  :global(body) { margin: 0; background: #283957; }
  .vs { position: relative; width: 1280px; height: 975px; display: flex; flex-direction: column; background: #293955; font: 11px "DejaVu Sans", Verdana, sans-serif; letter-spacing: -.5px; color: #000; overflow: hidden; }
  .ic { display: block; flex: none; overflow: visible; }
  .off { filter: grayscale(1) opacity(.6); }
  u { text-decoration: underline; }

  .vtitle { height: 18px; flex: none; display: flex; align-items: center; padding-left: 2px; background: linear-gradient(90deg, #0a246a, #a6caf0); color: #fff; }
  .ttext { font: 700 11.5px "Liberation Sans", Arial, sans-serif; letter-spacing: 0; margin-left: 2px; }
  .wbtns { margin-left: auto; display: flex; gap: 2px; padding-right: 2px; }
  .wbtn { width: 16px; height: 14px; padding: 0; border: 0; background: #d4d0c8; box-shadow: inset 1px 1px #fff, inset -1px -1px #404040, inset -2px -2px #808080; position: relative; display: block; }
  .wbtn i { position: absolute; display: block; font-style: normal; }
  .gmin { left: 4px; top: 9px; width: 6px; height: 2px; background: #000; }
  .gmax { left: 3px; top: 2px; width: 9px; height: 9px; border: 1px solid #000; border-top-width: 2px; box-sizing: border-box; }
  .grest { left: 3px; top: 5px; width: 7px; height: 6px; border: 1px solid #000; border-top-width: 2px; box-sizing: border-box; box-shadow: 2px -3px 0 -1px #d4d0c8, 3px -3px 0 0 #000; background: #d4d0c8; }
  .gx { left: 0; right: 0; top: 0; text-align: center; font-size: 10px; line-height: 13px; font-weight: 700; color: #000; font-family: "DejaVu Sans", sans-serif; }

  .chrome { height: 73px; flex: none; background: #b0bbcd; display: flex; flex-direction: column; }
  .vmenu { height: 22px; flex: none; display: flex; align-items: center; padding-left: 6px; color: #101010; }
  .mi { flex: none; white-space: nowrap; }
  .trow { display: flex; flex: none; }
  .r1 { height: 24px; margin-bottom: 1px; }
  .r2 { height: 24px; }
  .tb { position: relative; display: flex; align-items: center; background: #bcc7d9; border-radius: 3px; height: 100%; }
  .t1 { margin-left: 2px; width: 1087px; }
  .t2 { margin-left: 2px; width: 189px; }
  .t3 { margin-left: 2px; width: 418px; }
  .ovf { position: absolute; top: 0; bottom: 0; right: 0; width: 11px; background: #d5dce8; border-radius: 0 3px 3px 0; }
  .ovf::after { content: ""; position: absolute; left: 2px; bottom: 5px; width: 0; height: 0; border: 3px solid transparent; border-top-color: #000; border-bottom: 0; }
  .ovf::before { content: ""; position: absolute; left: 2px; bottom: 9px; width: 6px; height: 1px; background: #000; }
  .slot { flex: none; display: block; }
  .tsep { flex: none; width: 1px; height: 18px; background: #8f9bb0; }
  .tarr { flex: none; display: inline-block; width: 0; height: 0; border: 3px solid transparent; border-top: 4px solid #101010; border-bottom: 0; }
  .tarr.g { border-top-color: #888; }
  .grip { flex: none; width: 3px; height: 14px; background: repeating-linear-gradient(180deg, #4a5a78 0 2px, transparent 2px 4px); }
  .combo { flex: none; height: 19px; box-sizing: border-box; background: #fff; border: 1px solid #7f8ea8; border-radius: 2px; display: flex; align-items: center; padding: 0 5px 0 3px; justify-content: space-between; }

  .dock { height: 859px; flex: none; display: flex; align-items: flex-start; padding-top: 6px; box-sizing: border-box; }
  .left { width: 168px; margin-left: 6px; flex: none; }
  .phead { height: 19px; display: flex; align-items: center; background: linear-gradient(#52658a, #4a5e80); color: #eef1f6; border-radius: 3px 3px 0 0; }
  .ptitle { margin-left: 2px; width: 124px; flex: none; position: relative; top: 1px; }
  .dn { flex: none; width: 0; height: 0; border: 4px solid transparent; border-top: 5px solid #dfe4ee; border-bottom: 0; margin-right: 5px; }
  .pinx { flex: none; margin-right: 2px; }
  .sp { flex: 1; }
  .ptool { height: 26px; background: #bcc7d9; display: flex; align-items: center; }
  .tree { position: relative; height: 764px; background: #fff; box-sizing: border-box; padding-top: 1px; overflow: hidden; }
  .guides { position: absolute; left: 0; top: 1px; }
  .trow-i { position: relative; height: 16px; display: flex; align-items: center; white-space: nowrap; }
  .exp { flex: none; width: 9px; height: 9px; }
  .box { display: block; width: 9px; height: 9px; box-sizing: border-box; background: #fff linear-gradient(#000, #000) center/5px 1px no-repeat; border: 1px solid #808080; position: relative; }
  .box.plus::after { content: ""; position: absolute; left: 3px; top: 1px; width: 1px; height: 5px; background: #000; }
  .tic { flex: none; margin-left: 12px; background: #fff; }
  .lbl { margin-left: 2px; padding: 1px 1px 0 2px; line-height: 15px; position: relative; height: 16px; box-sizing: border-box; }
  .lbl:empty { display: none; }
  .sel { background: #d4d0c8; flex: 1; }
  .hsb { height: 16px; display: flex; }
  .sbtn { flex: none; width: 16px; height: 16px; box-sizing: border-box; background: #d4d0c8; box-shadow: inset 1px 1px #fff, inset -1px -1px #404040, inset -2px -2px #808080; display: flex; align-items: center; justify-content: center; }
  .thumb { display: block; flex: none; background: #d4d0c8; box-shadow: inset 1px 1px #fff, inset -1px -1px #404040, inset -2px -2px #808080; }
  .thumb.h { width: 109px; margin-left: 1px; }
  .chk { flex: 1; display: block; background: repeating-conic-gradient(#d4d0c8 0 25%, #fff 0 50%) 0 0/2px 2px; }
  .tri { display: block; width: 0; height: 0; border: 4px solid transparent; }
  .tri.u { border-bottom: 4px solid #000; border-top: 0; }
  .tri.d { border-top: 4px solid #000; border-bottom: 0; }
  .tri.l { border-right: 4px solid #000; border-left: 0; }
  .tri.r { border-left: 4px solid #000; border-right: 0; }
  .tri.g { opacity: .45; }
  .btabs { height: 21px; display: flex; gap: 5px; align-items: flex-start; color: #eef1f6; padding-left: 4px; }
  .btab { display: flex; align-items: center; gap: 3px; height: 21px; padding: 0 2px; flex: none; min-width: 32px; }
  .btab.on { background: #fff; color: #000; border-radius: 0 0 3px 3px; width: 38px; }

  .center { width: 1058px; margin-left: 6px; flex: none; }
  .etabs { height: 20px; position: relative; display: flex; align-items: center; color: #e6ebf3; }
  .etab { flex: none; padding: 0; height: 20px; line-height: 23px; white-space: nowrap; }
  .t-a { margin-left: 4px; width: 213px; }
  .etab.on { width: 106px; box-sizing: border-box; padding: 3px 0 0 3px; line-height: 17px; background: #fff2c8; color: #000; border-radius: 3px 3px 0 0; display: flex; align-items: center; gap: 4px; }
  .ex { font: 700 10px "DejaVu Sans", sans-serif; color: #6f6a5a; margin-left: auto; margin-right: 5px; }
  .t-c { margin-left: 4px; }
  .edn { position: absolute; right: 6px; top: 9px; margin: 0; }
  .doc { height: 656px; background: #fff; border-top: 4px solid #ffefc4; box-sizing: border-box; display: flex; flex-direction: column; }
  .drops { height: 23px; flex: none; display: flex; margin-top: 0; padding-bottom: 1px; box-sizing: border-box; }
  .dleft { width: 529px; box-sizing: border-box; display: flex; background: #f0f2f8; border: 2px solid #f3d68a; border-right-width: 1px; }
  .focus { flex: 1; margin: 1px 9px 1px 2px; display: flex; align-items: center; gap: 0; padding-left: 18px; border: 1px dashed #555; }
  .dbtn { width: 11px; display: flex; align-items: center; justify-content: center; background: #ffefc4; border-left: 1px solid #e8c050; }
  .dright { flex: 1; display: flex; align-items: center; gap: 1px; padding: 0 6px 0 0; background: #f0f2f8; border: 1px solid #8a98b0; }
  .dright > :global(svg) { margin-left: 4px; }
  .dright b { flex: 1; }
  .ebody { height: 609px; flex: none; display: flex; }
  .code { flex: 1; overflow: hidden; }
  .cline { height: 48px; border-bottom: 2px solid #d4d0c8; }
  .ctic { margin-top: 47px; text-align: right; padding-right: 1px; font: 11px "Liberation Mono", monospace; color: #a31515; line-height: 14px; letter-spacing: -.5px; }
  .evs { width: 16px; flex: none; display: flex; flex-direction: column; margin-right: 1px; }
  .split { height: 15px; flex: none; display: flex; align-items: center; justify-content: center; background: #dfe4ee; border: 1px solid #a0a8b8; box-sizing: border-box; margin-bottom: 3px; }
  .thumb.v1 { height: 392px; width: 16px; }
  .lt { flex: 1; display: block; background: #e9e8e4; }
  .ehs { height: 16px; flex: none; display: flex; }
  .corner { display: block; width: 17px; flex: none; background: #fff; }
  .lower { margin-top: 5px; }
  .band { height: 25px; background: #bcc7dc; }
  .lbody { height: 84px; display: flex; background: #fff; }
  .lwhite { flex: 1; }
  .lvs { width: 16px; margin-right: 1px; display: flex; flex-direction: column; height: 84px; }
  .sbtn.dis { box-shadow: inset 1px 1px #fff, inset -1px -1px #808080; }
  .lhs { height: 16px; display: flex; }
  .docktabs { display: flex; height: 21px; margin-top: 16px; align-items: flex-start; position: relative; left: -180px; }
  .docktabs i { display: block; height: 1px; flex: none; margin-top: 1px; }
  .m1 { margin-left: 188px; width: 12px; background: #8a96aa; }
  .m2 { margin-left: 106px; width: 5px; background: #d06030; }
  .m3 { margin-left: 126px; width: 64px; background: #fff; height: 4px !important; margin-top: 0 !important; }
  .m4 { margin-left: 11px; width: 8px; background: #8a96aa; }
  .m5 { margin-left: 86px; width: 12px; background: #8a96aa; }

  .right { width: 30px; margin-left: 6px; flex: none; }
  .rb { display: flex; height: 26px; background: #bcc7d9; }
  .rbg { flex: 1; }
  .rchev { width: 10px; background: #d5dce8; font-size: 9px; line-height: 16px; text-align: center; }
  .rwhite { position: relative; height: 366px; background: #fff; }
  .rglobe { position: absolute; left: 12px; top: 1px; }
  .rg { position: absolute; left: 0; top: 16px; }
  .rbtns { position: absolute; left: 1px; bottom: 0; display: flex; }
  .rbtns .sbtn { width: 14.500px; }
  .rtail { height: 19px; width: 10px; margin-left: 20px; background: #fff; border-radius: 0 0 3px 3px; }
  .rp.b { margin-top: 7px; }
  .rcombo { height: 26px; background: #bcc7d9; padding: 2px 1px; box-sizing: border-box; }
  .rcb { display: flex; height: 21px; background: #fff; border: 1px solid #e6e8ee; }
  .rcb span { flex: 1; }
  .rcb em { width: 12px; background: #d4d0c8; display: flex; align-items: center; justify-content: center; margin: 1px; }
  .rexp { height: 27px; background: #bcc7d9; display: flex; align-items: center; padding-left: 2px; border-bottom: 1px solid #707a8a; box-sizing: border-box; }
  .rexp :global(svg) { width: 24px; height: 24px; }
  .rw2 { height: 275px; background: #fff; }
  .rw3 { height: 60px; background: #dde2eb; border: 1px solid #8a93a3; box-sizing: border-box; }

  .status { height: 21px; flex: none; display: flex; align-items: center; color: #e6ebf3; padding-top: 2px; box-sizing: border-box; position: relative; }
  .s0 { margin-left: 3px; width: 922px; flex: none; }
  .s1 { width: 93px; flex: none; }
  .s2 { width: 92px; flex: none; }
  .s3 { width: 136px; flex: none; }
  .bottom { height: 4px; flex: none; background: #d4d0c8; border-top: 1px solid #eceae4; box-sizing: border-box; }

  .ffwin { position: absolute; left: 150px; top: 146px; width: 1046px; height: 792px; box-sizing: border-box; background: #d4d0c8; border: 1px solid #d4d0c8; border-right-color: #404040; border-bottom-color: #404040; box-shadow: inset -1px -1px #808080; display: flex; flex-direction: column; }
  .ftitle { height: 18px; flex: none; display: flex; align-items: center; padding-left: 2px; margin: 0 1px; background: linear-gradient(90deg, #0a246a, #a6caf0); color: #fff; }
  .ftext { font: 700 11.7px/16px "Liberation Sans", Arial, sans-serif; letter-spacing: 0; margin: 0 0 2px 3px; }
  .wbtns.f { padding-right: 3px; gap: 1px; }
  .fmenu { height: 22px; flex: none; display: flex; align-items: center; padding-left: 10px; color: #222; }
  .ftabs { position: relative; height: 25px; flex: none; display: flex; align-items: flex-end; padding-left: 3px; border-bottom: 1px solid #9c9a94; box-sizing: border-box; }
  .ftab { width: 250px; height: 24px; margin-bottom: -1px; box-sizing: border-box; display: flex; align-items: center; gap: 5px; padding-left: 7px; background: linear-gradient(#f3f2ef, #e9e7e3); border: 1px solid #a8a69f; border-bottom: 0; border-radius: 3px 3px 0 0; color: #222; }
  .fnew { margin-left: 1px; width: 28px; height: 23px; box-sizing: border-box; text-align: center; font: 700 18px/20px "Liberation Sans", sans-serif; background: linear-gradient(#d0cdc7, #b3b0a9); border: 1px solid #a8a69f; border-bottom: 0; border-radius: 3px 3px 0 0; color: #334; }
  .fdn { position: absolute; right: 7px; top: 11px; width: 0; height: 0; border: 3px solid transparent; border-top: 4px solid #888; border-bottom: 0; }
  .fnav { height: 38px; flex: none; display: flex; align-items: center; background: linear-gradient(#e9e7e3, #d4d0c8 70%); }
  .bf { position: relative; width: 54px; height: 32px; margin-left: 7px; flex: none; }
  .back { position: absolute; left: 0; top: 0; width: 30px; height: 30px; border-radius: 50%; background: linear-gradient(#fff, #dcdad5); border: 1px solid #9a9891; display: flex; align-items: center; justify-content: center; z-index: 1; }
  .fwd { position: absolute; left: 26px; top: 5px; width: 26px; height: 22px; box-sizing: border-box; padding-left: 6px; border-radius: 0 4px 4px 0; background: linear-gradient(#f4f3f0, #d8d6d1); border: 1px solid #b2b0a9; display: flex; align-items: center; justify-content: center; }
  .urlbar { width: 533px; height: 24px; box-sizing: border-box; margin-left: 7px; flex: none; display: flex; align-items: center; background: #fff; border: 1px solid #555; border-radius: 3px; padding-right: 6px; color: #222; }
  .site { width: 25px; height: 22px; display: flex; align-items: center; justify-content: center; background: linear-gradient(#e8e6e2, #cfcdc8); border-radius: 2px 0 0 2px; flex: none; }
  .url { margin-left: 3px; flex: 1; }
  .ustar { margin-right: 6px; }
  .nbtn { flex: none; height: 24px; width: 29px; box-sizing: border-box; display: flex; align-items: center; justify-content: center; background: linear-gradient(#f4f3f0, #d8d6d1); border: 1px solid #b2b0a9; border-radius: 4px; }
  .n1 { margin-left: 6px; }
  .n2 { margin-left: 7px; }
  .search { width: 275px; height: 24px; box-sizing: border-box; margin-left: 7px; flex: none; display: flex; align-items: center; background: #fff; border: 1px solid #555; border-radius: 3px; padding: 0 3px 0 4px; }
  .search .tarr { margin-left: 5px; }
  .gtext { margin-left: 5px; color: #888; flex: 1; }
  .n3 { margin-left: 6px; width: 30px; }
  .n4 { margin-left: 6px; width: 42px; justify-content: flex-start; }
  .bugc { width: 29px; display: flex; justify-content: center; border-right: 1px solid #b2b0a9; }
  .bugd { width: 11px; display: flex; justify-content: center; }
  .wdbar { height: 23px; flex: none; display: flex; align-items: center; padding-left: 7px; border-bottom: 1px solid #9c9a94; box-sizing: border-box; color: #222; }
  .wd { flex: none; display: flex; align-items: center; white-space: nowrap; gap: 5px; }
  .wda { width: 0; height: 0; border: 2px solid transparent; border-top: 3px solid #222; border-bottom: 0; margin-left: -3px; }
  .wend { display: flex; gap: 8px; margin-left: 2px; }
  .content { height: 643px; flex: none; display: flex; background: #fff; overflow: hidden; }
  .page { flex: 1; padding: 8px 0 0 11px; overflow: hidden; }
  table { border-collapse: collapse; table-layout: fixed; width: 966px; font: 15.500px "Liberation Serif", "Times New Roman", serif; letter-spacing: 0; color: #000; }
  th, td { border: 1px solid #000; height: 22px; padding: 2px 0 0 2px; box-sizing: border-box; line-height: 18px; white-space: nowrap; overflow: hidden; text-align: left; font-weight: 400; }
  th { text-align: center; font-weight: 700; padding: 2px 0 0; }
  td.undef { padding-left: 1px; letter-spacing: -.35px; }
  tr { height: 23px; }
  .fvs { width: 16px; flex: none; display: flex; flex-direction: column; margin-right: 2px; }
  .thumb.v2 { height: 24px; }
  .fvs .sbtn { height: 15px; }
  .fstatus { height: 20px; flex: none; display: flex; align-items: center; padding-right: 2px; }
  .fx { margin-left: 12px; font: 700 10px "DejaVu Sans", sans-serif; color: #555; }
  .sbug { margin-right: 10px; }
  .resz { margin-top: 6px; }
</style>
